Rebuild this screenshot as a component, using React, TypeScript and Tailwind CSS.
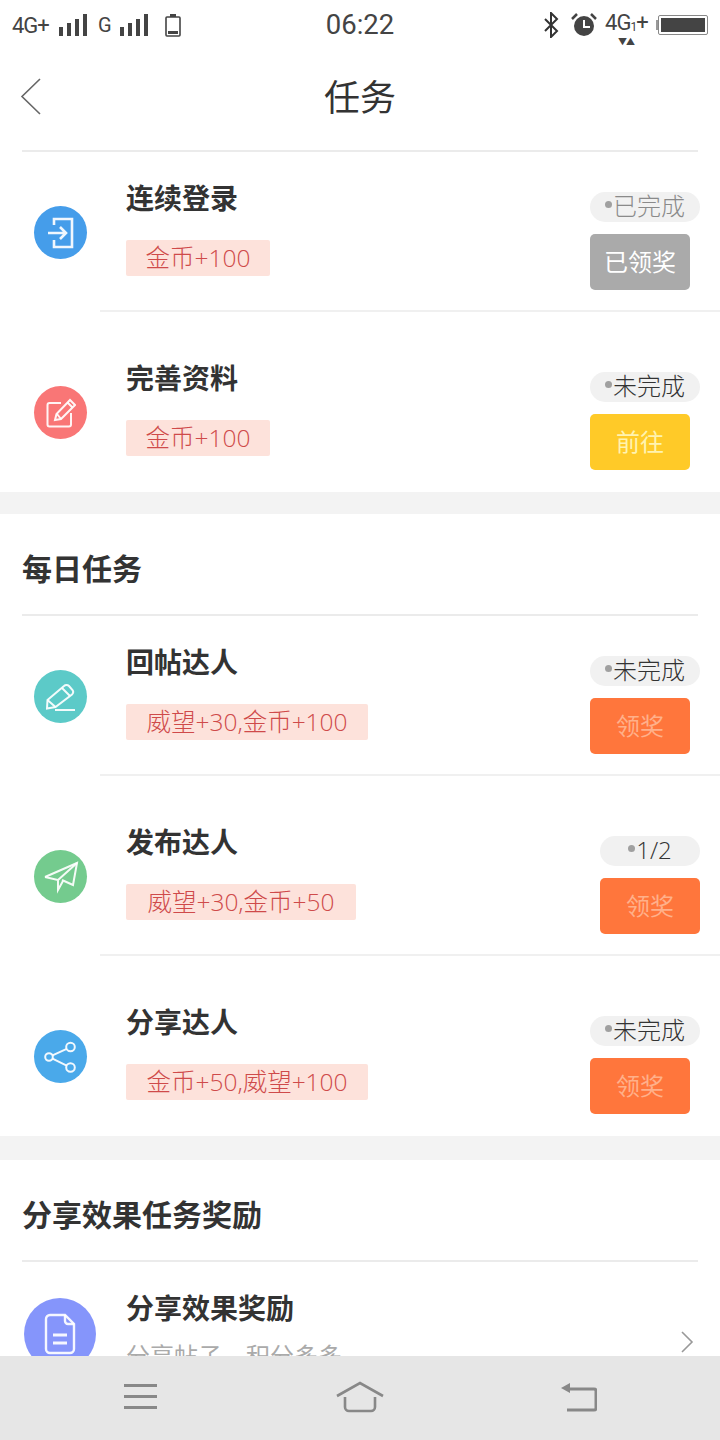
import React from 'react';

function Bars({ className }: { className?: string }) {
  return (
    <svg width="30" height="24" viewBox="0 0 30 24" className={className} fill="#444">
      <rect x="1" y="14" width="4" height="9" />
      <rect x="9" y="10" width="4" height="13" />
      <rect x="17" y="6" width="4" height="17" />
      <rect x="25" y="1" width="4" height="22" />
    </svg>
  );
}

function StatusBar() {
  return (
    <div className="flex h-[50px] items-center pl-3 pr-[12px] text-[#444]">
      <div className="flex flex-1 items-center">
        <span className="w-[41px] text-[22px] tracking-[-1px]">4G+</span>
        <Bars className="ml-[5px] mt-[-1px]" />
        <span className="ml-[10px] text-[20px]">G</span>
        <Bars className="ml-[7px] mt-[-1px]" />
        <svg width="18" height="24" viewBox="0 0 18 24" className="ml-[15px]" fill="none" stroke="#444" strokeWidth="1.6">
          <rect x="2" y="4" width="14" height="19" rx="1" />
          <rect x="6" y="1" width="6" height="3" fill="#444" stroke="none" />
          <rect x="4" y="18" width="10" height="3" fill="#444" stroke="none" />
        </svg>
      </div>
      <span className="text-[27.500px] leading-none">06:22</span>
      <div className="flex flex-1 items-center justify-end">
        <svg width="16" height="26" viewBox="0 0 16 26" fill="none" stroke="#333" strokeWidth="2">
          <path d="M2 7l12 12-6 6V1l6 6L2 19" />
        </svg>
        <svg width="26" height="26" viewBox="0 0 26 26" className="ml-[12px]">
          <circle cx="13" cy="14" r="10" fill="#444" />
          <path d="M13 8v7h6" fill="none" stroke="#fff" strokeWidth="2" />
          <path d="M1 7l5-5M25 7l-5-5" stroke="#444" strokeWidth="2.5" />
        </svg>
        <div className="relative ml-[8px] flex h-[28px] w-[46px] items-start text-[22px] leading-[24px] tracking-[-1px]">
          <span>4G</span>
          <span className="mt-[8px] text-[12px] leading-[16px]">1</span>
          <span>+</span>
          <span className="absolute bottom-[-8px] left-[13px] text-[9px] leading-[10px]">▼▲</span>
        </div>
        <span className="ml-[5px] h-[10px] w-[2px] bg-[#999]" />
        <div className="flex h-[20px] w-[50px] items-center rounded-[2px] border border-[#888] p-[2px]">
          <div className="h-full w-full bg-[#444]" />
        </div>
      </div>
    </div>
  );
}

function Header() {
  return (
    <div className="relative flex h-[100px] items-center justify-center pb-[2px]">
      <svg width="22" height="40" viewBox="0 0 22 40" fill="none" stroke="#666" strokeWidth="1.6" className="absolute left-[20px] top-[27px]">
        <path d="M20 2L2 19.5 20 37" />
      </svg>
      <span className="text-[36px] leading-none text-[#333]">任务</span>
    </div>
  );
}

function Circle({ color, size = 'small', className, children }: { color: string; size?: string; className?: string; children: React.ReactNode }) {
  return (
    <div className={`flex shrink-0 items-center justify-center rounded-full ${color} ${className ?? ''} ${size === 'large' ? 'h-[72px] w-[72px]' : 'h-[53px] w-[53px]'}`}>
      {children}
    </div>
  );
}

const iconProps = { fill: 'none', stroke: 'rgba(255,255,255,0.92)', strokeWidth: 2 };

const LoginIcon = (
  <svg width="26" height="32" viewBox="0 0 26 32" {...iconProps} strokeWidth="2.6">
    <path d="M6 8V2h18v28H6v-7" />
    <path d="M0 16h18M12 10l6 6-6 6" />
  </svg>
);
const EditIcon = (
  <svg width="30" height="30" viewBox="0 0 30 30" {...iconProps}>
    <path d="M15 5H3.500A2 2 0 0 0 1.500 7v19.500a2 2 0 0 0 2 2H23a2 2 0 0 0 2-2V15" />
    <path d="M9 22l1.500-6L24 2l5 5-14 14z" />
    <path d="M11 16l4 5M21.500 4.500l5 5" />
  </svg>
);
const PenIcon = (
  <svg width="30" height="28" viewBox="0 0 30 28" {...iconProps}>
    <path d="M1.500 17L18 3a3.500 3.500 0 0 1 5 0l3.500 4a3.500 3.500 0 0 1-.5 4.500L9.500 24 1 25.500z" />
    <path d="M1.500 17l8 7M16 5l8 8" />
    <path d="M9 27h20" />
  </svg>
);
const PlaneIcon = (
  <svg width="36" height="34" viewBox="0 0 36 34" {...iconProps}>
    <path d="M2 17L34 3l-4 22-11-5" />
    <path d="M2 17l13 3v10l5-9M34 3L15 20" />
  </svg>
);
const ShareIcon = (
  <svg width="36" height="36" viewBox="0 0 36 36" {...iconProps}>
    <circle cx="6" cy="18" r="3.800" />
    <circle cx="27.500" cy="8" r="4.300" />
    <circle cx="27.500" cy="28.500" r="4.300" />
    <path d="M9.500 16.300L23.700 9.800M9.500 19.700l14.200 7" />
  </svg>
);
const DocIcon = (
  <svg width="32" height="42" viewBox="0 0 32 42" {...iconProps} strokeWidth="2.4">
    <path d="M21 2H6a4 4 0 0 0-4 4v30a4 4 0 0 0 4 4h20a4 4 0 0 0 4-4V11z" />
    <path d="M21 2v6a3 3 0 0 0 3 3h6" />
    <path d="M9 22h14M9 30h14" strokeWidth="3" />
  </svg>
);

type Task = {
  title: string;
  reward: string;
  rewardW: string;
  icon: React.ReactNode;
  color: string;
  status: string;
  done?: boolean;
  action: string;
  actionColor: string;
  actionText: string;
  wide?: boolean;
  compact?: boolean; // first row under a divider sits 20px higher
  last?: boolean;
};

function TaskRow({ t }: { t: Task }) {
  return (
    <>
      <div className={`flex pl-[34px] ${t.compact ? 'h-[158px]' : t.last ? 'h-[180px]' : 'h-[178px]'}`}>
        <Circle color={t.color} className={t.compact ? 'mt-[54px]' : 'mt-[74px]'}>{t.icon}</Circle>
        <div className={`ml-[39px] flex flex-1 flex-col ${t.compact ? 'pt-[28px]' : 'pt-[48px]'}`}>
          <div className="text-[28px] font-bold leading-[40px] text-[#333]">{t.title}</div>
          <div className={`mt-[20px] flex h-[36px] items-center justify-center rounded-[2px] bg-[#fde2db] pt-[1px] font-["Open_Sans","Noto_Sans_CJK_SC",sans-serif] text-[24.500px] font-light text-[#cf4a4a] ${t.rewardW}`}>
            {t.reward}
          </div>
        </div>
        <div className={`mr-[20px] flex flex-col items-start ${t.compact ? 'pt-[40px]' : 'pt-[60px]'} ${t.wide ? 'w-[100px]' : 'w-[110px]'}`}>
          <div className={`flex h-[30px] items-center justify-center rounded-full bg-[#f1f1f1] pb-[3px] font-["Open_Sans","Noto_Sans_CJK_SC",sans-serif] text-[24px] font-light leading-none ${t.wide ? 'w-[100px]' : 'w-[110px]'} ${t.done ? 'text-[#8a8a8a]' : 'text-[#333]'}`}>
            <span className="mr-[1px] mt-[-2px] h-[7px] w-[7px] rounded-full bg-[#a0a0a0]" />
            {t.status}
          </div>
          <div className={`mt-[12px] flex h-[56px] w-[100px] items-center justify-center rounded-[5px] pt-[2px] text-[24px] ${t.actionColor} ${t.actionText}`}>
            {t.action}
          </div>
        </div>
      </div>
      {!t.last && <div className="ml-[100px] h-[2px] bg-[#f0f0f0]" />}
    </>
  );
}

const first: Task[] = [
  { title: '连续登录', reward: '金币+100', rewardW: 'w-[144px]', icon: LoginIcon, color: 'bg-[#459dea]', status: '已完成', done: true, action: '已领奖', actionColor: 'bg-[#aaaaaa]', actionText: 'text-white', compact: true },
  { title: '完善资料', reward: '金币+100', rewardW: 'w-[144px]', icon: EditIcon, color: 'bg-[#f97676]', status: '未完成', action: '前往', actionColor: 'bg-[#ffca28]', actionText: 'text-[#fff3b0]', last: true },
];

const daily: Task[] = [
  { title: '回帖达人', reward: '威望+30,金币+100', rewardW: 'w-[242px]', icon: PenIcon, color: 'bg-[#5ccac8]', status: '未完成', action: '领奖', actionColor: 'bg-[#ff763c]', actionText: 'text-[#ffb08a]', compact: true },
  { title: '发布达人', reward: '威望+30,金币+50', rewardW: 'w-[230px]', icon: PlaneIcon, color: 'bg-[#74cb8e]', status: '1/2', action: '领奖', actionColor: 'bg-[#ff763c]', actionText: 'text-[#ffb08a]', wide: true },
  { title: '分享达人', reward: '金币+50,威望+100', rewardW: 'w-[242px]', icon: ShareIcon, color: 'bg-[#4aa9ea]', status: '未完成', action: '领奖', actionColor: 'bg-[#ff763c]', actionText: 'text-[#ffb08a]', last: true },
];

function SectionTitle({ children }: { children: React.ReactNode }) {
  return (
    <div className="mx-[22px] flex h-[102px] items-center border-b-2 border-[#ebebeb] pt-[10px] text-[30px] font-bold text-[#333]">
      {children}
    </div>
  );
}

function BottomNav() {
  return (
    <div className="flex h-[84px] shrink-0 items-center justify-between bg-[#e6e6e6] pb-[2px] pl-[124px] pr-[123px]">
      <svg width="34" height="26" viewBox="0 0 34 26" fill="#888">
        <rect y="0" width="33" height="3" />
        <rect y="11" width="33" height="3" />
        <rect y="22" width="33" height="3" />
      </svg>
      <svg width="48" height="32" viewBox="0 0 48 32" fill="none" stroke="#888" strokeWidth="2.600">
        <path d="M1 15L24 2l23 13" />
        <path d="M9 16v10a4 4 0 0 0 4 4h22a4 4 0 0 0 4-4V16" />
      </svg>
      <svg width="36" height="30" viewBox="0 0 36 30" fill="none" stroke="#888" strokeWidth="3">
        <path d="M6 7h27a2 2 0 0 1 2 2v17a2 2 0 0 1-2 2H6" />
        <path d="M0 6l9-5v10z" fill="#888" stroke="none" />
      </svg>
    </div>
  );
}

export default function App() {
  return (
    <div className='flex h-[1440px] w-[720px] flex-col overflow-hidden bg-white font-["Roboto","Noto_Sans_CJK_SC",sans-serif]'>
      <div className="min-h-0 flex-1 overflow-hidden">
        <StatusBar />
        <Header />
        <div className="mx-[22px] h-[2px] bg-[#ebebeb]" />
        {first.map((t) => (
          <TaskRow key={t.title} t={t} />
        ))}
        <div className="h-[22px] bg-[#f3f3f3]" />
        <SectionTitle>每日任务</SectionTitle>
        {daily.map((t) => (
          <TaskRow key={t.title} t={t} />
        ))}
        <div className="h-[24px] bg-[#f3f3f3]" />
        <SectionTitle>分享效果任务奖励</SectionTitle>
        <div className="flex h-[160px] pl-[24px] pr-[26px] pt-[28px]">
          <Circle color="bg-[#8595fb]" size="large" className="mt-[8px]">{DocIcon}</Circle>
          <div className="ml-[30px] flex-1">
            <div className="text-[28px] font-bold leading-[40px] text-[#333]">分享效果奖励</div>
            <div className="mt-[9px] text-[24px] text-[#aaaaaa]">分享帖子，积分多多</div>
          </div>
          <svg width="14" height="22" viewBox="0 0 14 22" fill="none" stroke="#999" strokeWidth="1.600" className="mt-[41px]">
            <path d="M2 1l10 10L2 21" />
          </svg>
        </div>
      </div>
      <BottomNav />
    </div>
  );
}
